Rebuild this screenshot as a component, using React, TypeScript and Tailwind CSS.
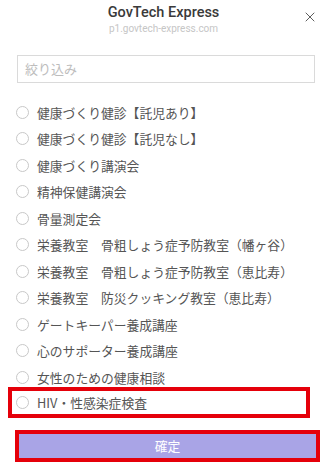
import { X } from "lucide-react";

const items = [
  "健康づくり健診【託児あり】",
  "健康づくり健診【託児なし】",
  "健康づくり講演会",
  "精神保健講演会",
  "骨量測定会",
  "栄養教室　骨粗しょう症予防教室（幡ヶ谷）",
  "栄養教室　骨粗しょう症予防教室（恵比寿）",
  "栄養教室　防災クッキング教室（恵比寿）",
  "ゲートキーパー養成講座",
  "心のサポーター養成講座",
  "女性のための健康相談",
];

const jp = { fontFamily: '"Noto Sans CJK JP", "Noto Sans", sans-serif' };

function Radio() {
  return <span className="w-[13px] h-[13px] rounded-full border border-[#c8c8c8] bg-white shrink-0" />;
}

export default function App() {
  return (
    <div className="w-[327px] h-[472px] bg-white overflow-hidden" style={jp}>
      {/* Header */}
      <div className="relative h-[40px] flex flex-col items-center pt-[3px]">
        <div className="text-[14.5px] font-medium text-[#3a3a3a] leading-[20px]" style={{ fontFamily: "Roboto, sans-serif" }}>
          GovTech Express
        </div>
        <div className="text-[10px] text-[#c6c6c6] leading-[12px]" style={{ fontFamily: "Roboto, sans-serif" }}>
          p1.govtech-express.com
        </div>
        <button className="absolute right-[9px] top-[9px] text-[#444]" aria-label="close">
          <X className="w-[16px] h-[16px]" strokeWidth={1.3} />
        </button>
      </div>

      {/* Filter */}
      <div className="pl-[17px] pr-[12px] mt-[15px]">
        <div className="h-[28px] border border-[#dadada] flex items-center px-[7px]">
          <span className="text-[13px] text-[#bdbdbd]">絞り込み</span>
        </div>
      </div>

      {/* Options */}
      <div className="mt-[16px] pl-[16px] pr-[17px]">
        {items.map((t) => (
          <div key={t} className="h-[26.5px] flex items-center gap-[8px]">
            <Radio />
            <span className="text-[12.8px] text-[#555] whitespace-nowrap">{t}</span>
          </div>
        ))}
        <div className="-ml-[8px] w-[302px] -mt-[3.5px] h-[31px] border-4 border-[#e5000a] flex items-center gap-[8px] pl-[4px]">
          <Radio />
          <span className="text-[12.8px] text-[#555] whitespace-nowrap">HIV・性感染症検査</span>
        </div>
      </div>

      {/* Confirm */}
      <div className="pl-[15px] pr-[7px] mt-[12px]">
        <div className="h-[32px] border-4 border-[#e5000a] bg-[#a9a4e6] flex items-center justify-center">
          <span className="text-[12.8px] text-white">確定</span>
        </div>
      </div>
    </div>
  );
}
